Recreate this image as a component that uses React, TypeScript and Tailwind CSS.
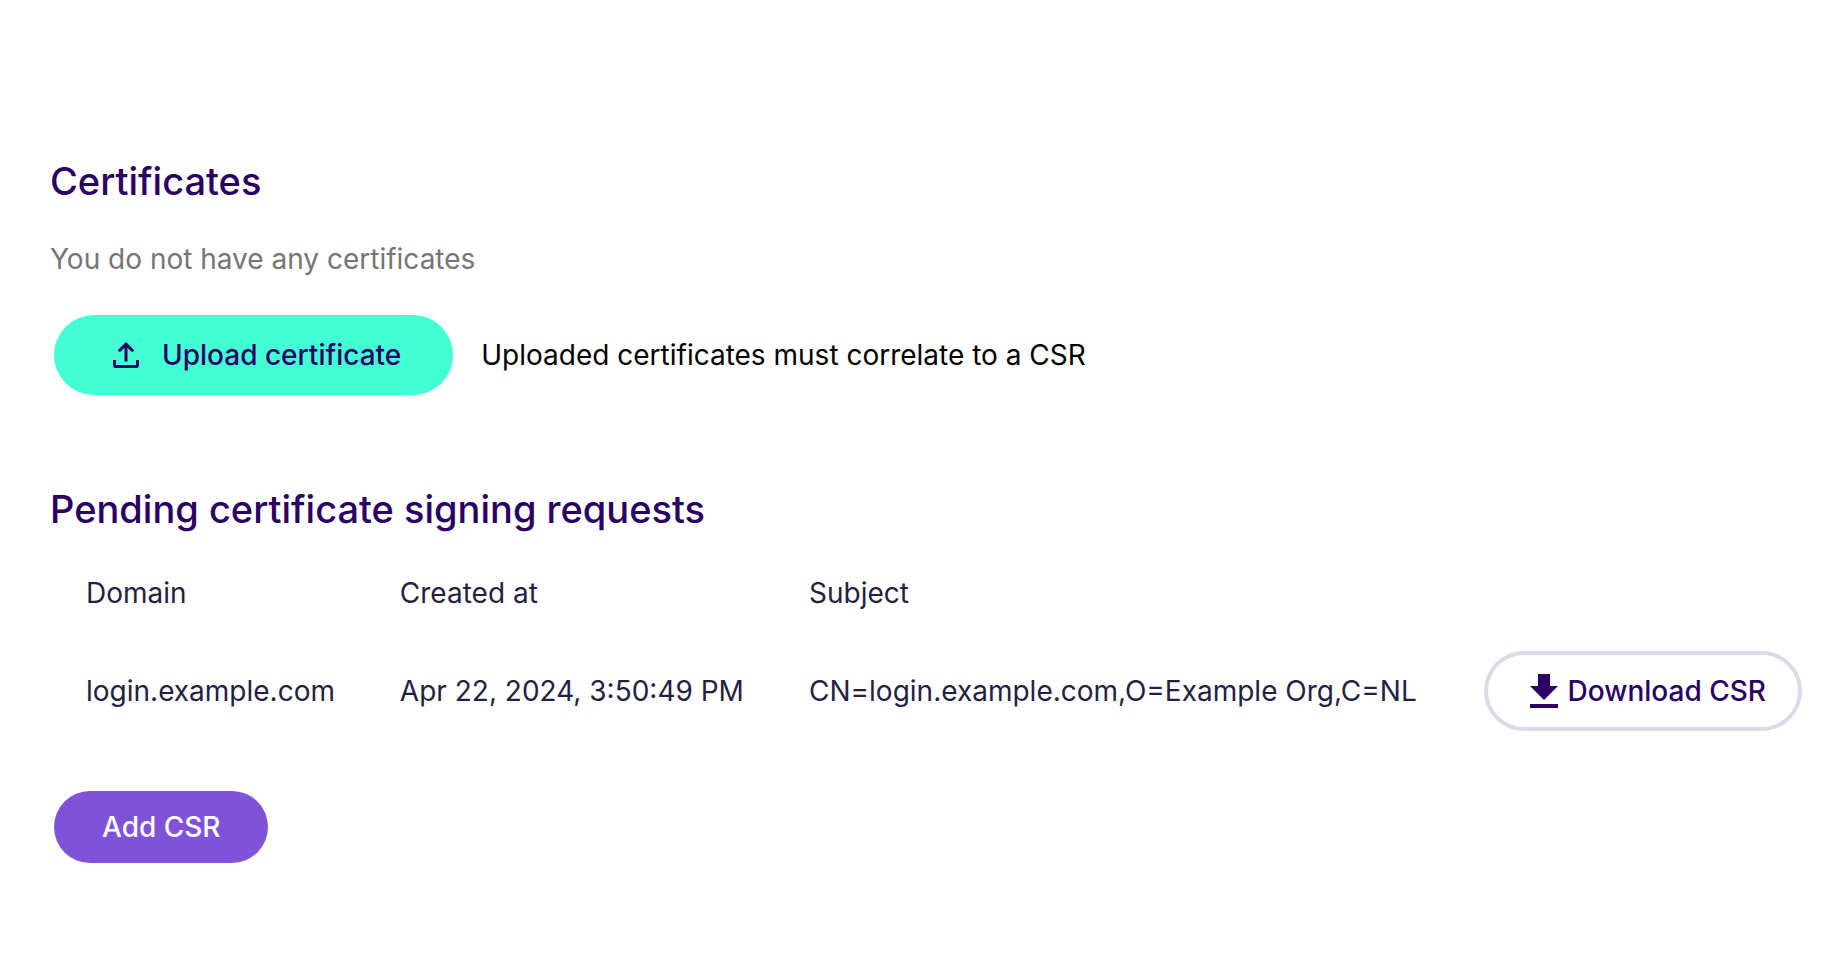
const csrs = [
  {
    domain: 'login.example.com',
    createdAt: 'Apr 22, 2024, 3:50:49 PM',
    subject: 'CN=login.example.com,O=Example Org,C=NL',
  },
];

function UploadIcon() {
  return (
    <svg viewBox="0 0 28 28" fill="none" stroke="currentColor" strokeWidth="3" className="size-7 shrink-0" aria-hidden="true">
      <path d="M14 20.5V4M6.8 10.3L14 3.2L21.2 10.3" />
      <path d="M2.5 19V24a1.6 1.6 0 0 0 1.6 1.6H23.9a1.6 1.6 0 0 0 1.6-1.6V19" />
    </svg>
  );
}

function DownloadIcon() {
  return (
    <svg viewBox="0 0 28 34" fill="currentColor" className="h-[34px] w-7 shrink-0" aria-hidden="true">
      <path d="M8 0H20V12H28L14 26L0 12H8ZM0 30H28V34H0Z" />
    </svg>
  );
}

export default function App() {
  return (
    <main className="min-h-screen bg-white pt-[155px] pr-[22px] pb-24 pl-[50px] font-['Inter',sans-serif] text-[28px] leading-10 text-[#241f42]">
      <section>
        <h2 className="text-[38px] leading-[52px] font-medium text-[#2a0064]">Certificates</h2>
        <p className="mt-8 text-[#757575]">You do not have any certificates</p>
        <div className="mt-9 flex items-center gap-7 pl-1">
          <button className="flex h-20 items-center gap-[22px] rounded-full bg-[#42ffd4] pr-[52px] pl-[58px] font-medium text-[#2a0064]">
            <UploadIcon />
            Upload certificate
          </button>
          <p className="text-black">Uploaded certificates must correlate to a CSR</p>
        </div>
      </section>

      <section className="mt-[88px]">
        <h2 className="text-[38px] leading-[52px] font-medium text-[#2a0064]">Pending certificate signing requests</h2>
        <table className="mt-4 w-full text-left whitespace-nowrap">
          <thead>
            <tr className="h-[84px]">
              <th className="pr-7 pl-9 font-normal">Domain</th>
              <th className="pr-7 pl-9 font-normal">Created at</th>
              <th className="pr-7 pl-9 font-normal">Subject</th>
              <td />
            </tr>
          </thead>
          <tbody>
            {csrs.map((csr) => (
              <tr key={csr.domain} className="h-28">
                <td className="pr-7 pl-9">{csr.domain}</td>
                <td className="pr-7 pl-9">{csr.createdAt}</td>
                <td className="pr-7 pl-9">{csr.subject}</td>
                <td className="pl-9">
                  <button className="ml-auto flex h-20 items-center gap-2.5 rounded-full border-4 border-[#ded8e8] pr-8 pl-[42px] font-medium text-[#2a0064]">
                    <DownloadIcon />
                    Download CSR
                  </button>
                </td>
              </tr>
            ))}
          </tbody>
        </table>
        <button className="mt-11 ml-1 h-[72px] rounded-full bg-[#7f52d9] px-12 font-medium text-white">Add CSR</button>
      </section>
    </main>
  );
}
